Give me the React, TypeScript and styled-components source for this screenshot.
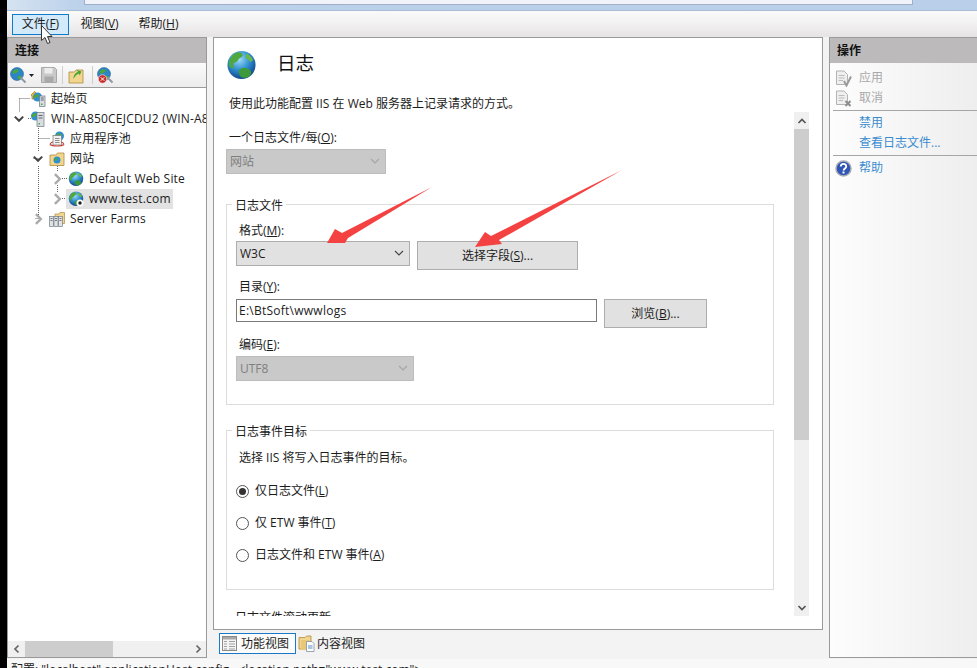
import React, { useId } from 'react';
import styled, { createGlobalStyle } from 'styled-components';

const GlobalStyle = createGlobalStyle`
  html, body {
    margin: 0;
    padding: 0;
    background: #000;
  }
  body {
    font-family: "Open Sans", "Noto Sans CJK SC", sans-serif;
    font-size: 12px;
    line-height: 16px;
    color: #1c1c1c;
  }
  * {
    box-sizing: border-box;
  }
`;

const Shell = styled.div`
  position: relative;
  width: 977px;
  height: 668px;
  overflow: hidden;
  display: flex;
  flex-direction: column;
  border-left: 7px solid #000;
  background: #f3f3f3;
`;

const TitleBand = styled.div`
  height: 11px;
  flex: none;
  padding-left: 77px;
  background: linear-gradient(90deg, #d5e2f1 0, #bcd2eb 70px, #b9cfea 100%);
  border-bottom: 1px solid #a9bcd6;
`;

const AddressBox = styled.div`
  width: 829px;
  height: 5px;
  background: #f0f4fa;
  border: 1px solid #9fb0c6;
  border-top: none;
`;

const MenuBar = styled.div`
  height: 26px;
  flex: none;
  display: flex;
  align-items: center;
  gap: 2px;
  padding-left: 5px;
  background: linear-gradient(180deg, #fafafa 0%, #f4f3f3 40%, #e5e3e3 100%);
`;

const MenuItem = styled.div<{ $active?: boolean }>`
  width: 57px;
  height: 21px;
  display: flex;
  align-items: center;
  justify-content: center;
  border: 1px solid ${(p) => (p.$active ? '#0f7ccb' : 'transparent')};
  background: ${(p) => (p.$active ? '#d3eafb' : 'transparent')};
`;

const Main = styled.div`
  height: 621px;
  flex: none;
  display: flex;
  gap: 6px;
`;

const Panel = styled.section`
  display: flex;
  flex-direction: column;
  border: 1px solid #9a9a9a;
  background: #fff;
  overflow: hidden;
`;

const LeftPanel = styled(Panel)`
  width: 200px;
`;

const PanelHeader = styled.header`
  height: 25px;
  flex: none;
  display: flex;
  align-items: center;
  padding-left: 7px;
  background: #bcbabb;
  font-weight: 700;
  color: #111;
`;

const Toolbar = styled.div`
  height: 25px;
  flex: none;
  display: flex;
  align-items: center;
  padding-left: 2px;
  background: linear-gradient(180deg, #fbfbfb, #ececec);
  border-bottom: 1px solid #9a9a9a;
`;

const ToolGap = styled.span`
  width: 7px;
`;

const ToolCaret = styled.svg`
  margin-left: 2px;
`;

const ToolSep = styled.span<{ $left: number; $right: number }>`
  width: 1px;
  height: 18px;
  background: #cfcfcf;
  margin: 0 ${(p) => p.$right}px 0 ${(p) => p.$left}px;
`;

const Tree = styled.div`
  position: relative;
  flex: 1;
  padding-top: 1px;
  overflow: hidden;
  letter-spacing: 0.2px;
`;

const TreeLines = styled.svg`
  position: absolute;
  left: 0;
  top: 0;
`;

const TreeRow = styled.div<{ $depth: number }>`
  position: relative;
  height: 20px;
  display: flex;
  align-items: center;
  white-space: nowrap;
  padding-left: ${(p) => 3 + p.$depth * 19}px;
`;

const Expander = styled.span`
  width: 19px;
  height: 20px;
  flex: none;
  display: flex;
  align-items: center;
  justify-content: center;
  padding-right: 3px;
`;

const NodeBody = styled.span<{ $selected?: boolean }>`
  height: 20px;
  display: flex;
  align-items: center;
  gap: 5px;
  margin-left: -2px;
  padding: 0 2px 0 2px;
  background: ${(p) => (p.$selected ? '#e2e2e2' : 'transparent')};
`;

const HScroll = styled.div`
  height: 16px;
  flex: none;
  display: flex;
  align-items: center;
  background: #f0f0f0;
`;

const HArrow = styled.span`
  width: 17px;
  height: 16px;
  flex: none;
  display: flex;
  align-items: center;
  justify-content: center;
`;

const HThumb = styled.span`
  width: 88px;
  height: 16px;
  background: #cdcdcd;
  margin-right: auto;
`;

const CenterColumn = styled.div`
  width: 610px;
  display: flex;
  flex-direction: column;
`;

const CenterPanel = styled(Panel)`
  height: 593px;
  flex: none;
  padding-bottom: 13px;
`;

const Head = styled.div`
  height: 74px;
  flex: none;
  padding: 12px 0 0 12px;
`;

const TitleRow = styled.div`
  display: flex;
  align-items: flex-start;
  gap: 20px;
  height: 31px;
`;

const Title = styled.h1`
  margin: 0;
  font-size: 18.5px;
  line-height: 26px;
  font-weight: 400;
  color: #111;
`;

const Description = styled.p`
  margin: 15px 0 0 3px;
`;

const BodyRow = styled.div`
  flex: 1;
  min-height: 0;
  display: flex;
`;

const Body = styled.div`
  flex: 1;
  min-width: 0;
  overflow: hidden;
  padding: 18px 20px 0 12px;
`;

const FieldLabel = styled.div<{ $top?: number; $inset?: number }>`
  margin-top: ${(p) => p.$top ?? 0}px;
  margin-left: ${(p) => p.$inset ?? 3}px;
`;

const Group = styled.fieldset<{ $top: number; $bottom?: number }>`
  margin: ${(p) => p.$top}px 0 0;
  padding: 11px 9px ${(p) => p.$bottom ?? 0}px;
  border: 1px solid #dcdcdc;
  min-width: 0;
`;

const Legend = styled.legend`
  position: relative;
  top: 2px;
  margin-left: -4px;
  padding: 0 3px;
`;

const Select = styled.div<{ $width: number; $disabled?: boolean; $top: number }>`
  width: ${(p) => p.$width}px;
  height: 25px;
  flex: none;
  margin-top: ${(p) => p.$top}px;
  display: flex;
  align-items: center;
  justify-content: space-between;
  padding: 0 5px 0 3px;
  border: 1px solid ${(p) => (p.$disabled ? '#bdbdbd' : '#adadad')};
  background: ${(p) => (p.$disabled ? '#c9c9c9' : '#e1e1e1')};
  color: ${(p) => (p.$disabled ? '#7f7f7f' : '#1c1c1c')};
`;

const ControlRow = styled.div<{ $top: number }>`
  display: flex;
  align-items: flex-start;
  gap: 7px;
  margin-top: ${(p) => p.$top}px;
`;

const Button = styled.div<{ $width: number }>`
  width: ${(p) => p.$width}px;
  height: 29px;
  flex: none;
  display: flex;
  align-items: center;
  justify-content: center;
  border: 1px solid #adadad;
  background: #e1e1e1;
`;

const TextBox = styled.div`
  width: 361px;
  height: 23px;
  flex: none;
  display: flex;
  align-items: center;
  padding-left: 2px;
  letter-spacing: 0.25px;
  border: 1px solid #7a7a7a;
  background: #fff;
`;

const RadioRow = styled.label<{ $top: number }>`
  display: flex;
  align-items: center;
  gap: 6px;
  height: 16px;
  margin-top: ${(p) => p.$top}px;
`;

const RadioMark = styled.span<{ $checked?: boolean }>`
  width: 13px;
  height: 13px;
  flex: none;
  display: flex;
  align-items: center;
  justify-content: center;
  border: 1px solid #555;
  border-radius: 50%;
  background: #fff;

  &::after {
    content: '';
    width: 7px;
    height: 7px;
    border-radius: 50%;
    background: ${(p) => (p.$checked ? '#333' : 'transparent')};
  }
`;

const VScroll = styled.div`
  width: 15px;
  flex: none;
  margin-right: 13px;
  display: flex;
  flex-direction: column;
  background: #f0f0f0;
`;

const VArrow = styled.span`
  height: 17px;
  flex: none;
  display: flex;
  align-items: center;
  justify-content: center;
`;

const VThumb = styled.span`
  height: 311px;
  flex: none;
  background: #cdcdcd;
  margin-bottom: auto;
`;

const TabBar = styled.div`
  display: flex;
  align-items: center;
  gap: 1px;
  margin: 3px 0 0 6px;
`;

const Tab = styled.div<{ $active?: boolean }>`
  height: 21px;
  display: flex;
  align-items: center;
  gap: ${(p) => (p.$active ? 4 : 2)}px;
  padding: 0 6px 0 ${(p) => (p.$active ? 2 : 0)}px;
  border: 1px solid ${(p) => (p.$active ? '#1a78c8' : 'transparent')};
  background: ${(p) => (p.$active ? '#fcfcfc' : 'transparent')};
`;

const RightPanel = styled(Panel)`
  flex: 1;
  border-right: none;
  background: linear-gradient(90deg, #fdfdfd, #eeeeee);
`;

const ActionList = styled.div`
  padding-top: 5px;
`;

const ActionRow = styled.div<{ $tone: 'muted' | 'link' }>`
  height: 20px;
  display: flex;
  align-items: center;
  padding-left: 29px;
  position: relative;
  color: ${(p) => (p.$tone === 'muted' ? '#a9a9a9' : '#3a8ccf')};
`;

const ActionIcon = styled.span`
  position: absolute;
  left: 5px;
  top: 2px;
  display: flex;
`;

const ActionSep = styled.div`
  height: 1px;
  margin: 2px 0 2px 3px;
  background: #a6a6a6;
`;

const StatusBar = styled.div`
  flex: 1;
  min-height: 0;
  overflow: hidden;
  margin-top: 1px;
  padding: 3px 0 0 4px;
  white-space: nowrap;
  background: #f8f8f8;
`;

const Overlay = styled.svg`
  position: absolute;
  left: -7px;
  top: 0;
  pointer-events: none;
`;

const Glyph = styled.svg`
  flex: none;
`;

const Globe = ({ size = 16, mark }: { size?: number; mark?: React.ReactNode }) => {
  const id = useId();
  return (
    <Glyph width={size} height={size} viewBox="0 0 32 32">
      <defs>
        <radialGradient id={id} cx="42%" cy="30%" r="75%">
          <stop offset="0" stopColor="#9fdcf7" />
          <stop offset="0.5" stopColor="#2f8fd0" />
          <stop offset="1" stopColor="#0c3b86" />
        </radialGradient>
      </defs>
      <circle cx="16" cy="15.5" r="14.5" fill={`url(#${id})`} />
      <path d="M9 3.5c4-2 7-1 8 1s-1 3-3 4-1 3-4 4-3 3-2 5-2 2-4 0-1-10 5-14z" fill="#4fa83d" />
      <path d="M21 3.5c3 1 6 4 7 7l-3 2-2-3-3-1 1-5z" fill="#68b84a" />
      <path d="M14 20c3-2 7-2 10 0s2 5 0 7-6 2-8 1-4-6-2-8z" fill="#3d9a3a" />
      {mark}
    </Glyph>
  );
};

const StartIcon = () => (
  <Glyph width="16" height="16" viewBox="0 0 32 32">
    <path d="M2 8l7-7 7 7-2 2v6H4v-6z" fill="#f0b93a" stroke="#b77c12" strokeWidth="1.5" />
    <circle cx="15" cy="12" r="9" fill="#2f8fd0" />
    <path d="M9 9c3-3 6-3 8-1s-2 4-4 5-3 2-5 0 0-3 1-4z" fill="#4fa83d" />
    <rect x="19" y="10" width="11" height="21" fill="#d9dde2" stroke="#6f7780" strokeWidth="1.4" />
    <path d="M21.500 14h6M21.500 18h6" stroke="#59616b" strokeWidth="2" />
    <rect x="22" y="25" width="3" height="3" fill="#46b04a" />
  </Glyph>
);

const ServerIcon = () => (
  <Glyph width="16" height="16" viewBox="0 0 32 32">
    <circle cx="11" cy="10" r="9" fill="#2f8fd0" />
    <path d="M5 7c3-3 6-3 8-1s-2 4-4 5-3 2-5 0 0-3 1-4z" fill="#4fa83d" />
    <rect x="14" y="3" width="14" height="28" fill="#d9dde2" stroke="#6f7780" strokeWidth="1.4" />
    <path d="M17 9h8M17 14h8" stroke="#59616b" strokeWidth="2" />
    <rect x="17" y="24" width="3" height="3" fill="#46b04a" />
  </Glyph>
);

const PoolIcon = () => (
  <Glyph width="16" height="16" viewBox="0 0 32 32">
    <circle cx="21" cy="10" r="9" fill="#2f8fd0" />
    <path d="M16 7c3-3 6-3 8-1s-2 4-4 5-3 2-5 0 0-3 1-4z" fill="#4fa83d" />
    <rect x="8" y="9" width="17" height="19" fill="#f1f1f1" stroke="#777" strokeWidth="1.4" />
    <path d="M12 15h9M12 19h9M12 23h9" stroke="#777" strokeWidth="1.6" />
    <path d="M2 27c1-3 3-5 6-5M30 27c-1-3-3-5-6-5M2 27c5 4 23 4 28 0" fill="none" stroke="#c9453a" strokeWidth="2.4" />
  </Glyph>
);

const SitesIcon = () => (
  <Glyph width="16" height="16" viewBox="0 0 32 32">
    <path d="M2 8h12l3-4h13v25H2z" fill="#f2d68f" stroke="#b08a3c" strokeWidth="1.6" />
    <circle cx="16" cy="18" r="7" fill="#2f8fd0" />
    <path d="M11 16c2-2 5-2 6-1s-1 3-3 4-3 1-4 0 0-2 1-3z" fill="#4fa83d" />
  </Glyph>
);

const FarmIcon = () => (
  <Glyph width="16" height="16" viewBox="0 0 32 32">
    <path d="M12 6h8l2-3h9v22H12z" fill="#f2d68f" stroke="#b08a3c" strokeWidth="1.4" />
    <g fill="#dfe3e6" stroke="#6f7780" strokeWidth="1.3">
      <rect x="1" y="11" width="8" height="20" />
      <rect x="10" y="11" width="8" height="20" />
      <rect x="19" y="11" width="8" height="20" />
    </g>
    <path d="M3 15h4M3 19h4M12 15h4M12 19h4M21 15h4M21 19h4" stroke="#59616b" strokeWidth="1.6" />
  </Glyph>
);

const Chevron = ({ dir, color = '#aaaaaa', size = 10 }: { dir: 'up' | 'down' | 'left' | 'right'; color?: string; size?: number }) => {
  const points = {
    up: '1.5,7 5,3.5 8.5,7',
    down: '1.5,3 5,6.5 8.5,3',
    left: '6.5,1.5 3,5 6.5,8.5',
    right: '3.5,1.5 7,5 3.5,8.5',
  }[dir];
  return (
    <svg width={size} height={size} viewBox="0 0 10 10">
      <polyline points={points} fill="none" stroke={color} strokeWidth="1.7" />
    </svg>
  );
};

const SelectCaret = ({ color }: { color: string }) => (
  <svg width="10" height="7" viewBox="0 0 10 7">
    <polyline points="1,1 5,5 9,1" fill="none" stroke={color} strokeWidth="1.1" />
  </svg>
);

const GlobeTool = ({ badge }: { badge?: boolean }) => (
  <Glyph width="17" height="17" viewBox="0 0 34 34">
    <circle cx="14" cy="14" r="13" fill="#2c86c6" stroke="#1b4f91" strokeWidth="1" />
    <path d="M6 8c4-4 9-4 11-2s-2 5-5 6-4 3-6 1-1-4 0-5zM15 19c3-2 6-2 8 0s0 5-3 6-6-4-5-6z" fill="#4aa63f" />
    <path d="M21 21l10 10" stroke="#8f98a3" strokeWidth="4" />
    {badge && <circle cx="11" cy="24" r="8.500" fill="#c92e2e" stroke="#fff" strokeWidth="1.2" />}
    {badge && <path d="M7.500 20.500l7 7M14.500 20.500l-7 7" stroke="#fff" strokeWidth="2" />}
  </Glyph>
);

const DiskTool = () => (
  <svg width="16" height="16" viewBox="0 0 32 32">
    <path d="M1 1h26l4 4v26H1z" fill="#c9c9c9" stroke="#9b9b9b" strokeWidth="1.6" />
    <rect x="7" y="2" width="16" height="11" fill="#ececec" />
    <rect x="7" y="19" width="18" height="12" fill="#a9a9a9" />
  </svg>
);

const FolderUpTool = () => (
  <svg width="16" height="17" viewBox="0 0 32 34">
    <path d="M2 10h11l3-4h14v26H2z" fill="#f2d68f" stroke="#b08a3c" strokeWidth="1.6" />
    <path d="M11 24c0-8 4-13 9-14l-2-4 9 3-4 8-1-4c-4 1-8 5-11 11z" fill="#41a63a" />
  </svg>
);

const DocAction = ({ kind }: { kind: 'check' | 'cross' }) => (
  <svg width="17" height="17" viewBox="0 0 34 34">
    <path d="M3 2h15l7 7v20H3z" fill="#efefef" stroke="#b3b3b3" strokeWidth="2" />
    <path d="M7 11h12M7 16h12M7 21h9" stroke="#bcbcbc" strokeWidth="2" />
    {kind === 'check' ? (
      <path d="M18 22l5 9 9-18" fill="none" stroke="#9a9a9a" strokeWidth="4" />
    ) : (
      <path d="M21 22l10 10M31 22L21 32" stroke="#8d8d8d" strokeWidth="4" />
    )}
  </svg>
);

const HelpIcon = () => (
  <svg width="17" height="17" viewBox="0 0 34 34">
    <circle cx="17" cy="17" r="15" fill="#2f55b5" stroke="#a9adb5" strokeWidth="3" />
    <path d="M11.500 13c0-7 11-7 11 0 0 4-5 4-5.500 8" fill="none" stroke="#fff" strokeWidth="3.6" />
    <rect x="15" y="23" width="4" height="4" fill="#fff" />
  </svg>
);

const GridTabIcon = () => (
  <svg width="15" height="15" viewBox="0 0 15 15">
    <rect x="0.5" y="0.5" width="14" height="14" fill="#f5f5f5" stroke="#8a8a8a" />
    <rect x="1" y="1" width="13" height="2.500" fill="#a9a9a9" />
    <path d="M2 5.500h3M2 8h3M2 10.500h3M2 13h3M7 5.500h6M7 8h6M7 10.500h6M7 13h6" stroke="#a0a0a0" />
  </svg>
);

const ContentTabIcon = () => (
  <svg width="17" height="17" viewBox="0 0 34 34">
    <path d="M2 5h12l3-3h9v26H2z" fill="#f2d68f" stroke="#b08a3c" strokeWidth="1.6" />
    <path d="M6 10h18v20H6z" fill="#e8c877" />
    <path d="M17 13h11l4 4v16H17z" fill="#fff" stroke="#7f8fa5" strokeWidth="1.6" />
    <path d="M20 22h9M20 26h9" stroke="#3f7fc1" strokeWidth="1.8" />
  </svg>
);

const App = () => (
  <>
    <GlobalStyle />
    <Shell>
      <TitleBand>
        <AddressBox />
      </TitleBand>
      <MenuBar>
        <MenuItem $active>文件(<u>F</u>)</MenuItem>
        <MenuItem>视图(<u>V</u>)</MenuItem>
        <MenuItem>帮助(<u>H</u>)</MenuItem>
      </MenuBar>
      <Main>
        <LeftPanel>
          <PanelHeader>连接</PanelHeader>
          <Toolbar>
            <GlobeTool />
            <ToolCaret width="5" height="3" viewBox="0 0 5 3">
              <polygon points="0,0 5,0 2.500,3" fill="#222" />
            </ToolCaret>
            <ToolGap />
            <DiskTool />
            <ToolSep $left={5} $right={5} />
            <FolderUpTool />
            <ToolSep $left={8} $right={4} />
            <GlobeTool badge />
          </Toolbar>
          <Tree>
            <TreeLines width="100" height="140" viewBox="0 0 100 140">
              <path
                d="M11.500 10.500H22M11.500 10.500V24M20 30.500h3M30.500 38V63M30.500 78V127M30.500 50.500H42M30.500 70.500H25M49.500 78V84M49.500 97V104M54 90.500h6M54 110.500h6M30.500 130.500H27"
                fill="none"
                stroke="#666"
                strokeDasharray="1 1"
              />
            </TreeLines>
            <TreeRow $depth={0}>
              <Expander />
              <NodeBody><StartIcon />起始页</NodeBody>
            </TreeRow>
            <TreeRow $depth={0}>
              <Expander><Chevron dir="down" color="#444" size={12} /></Expander>
              <NodeBody><ServerIcon />WIN-A850CEJCDU2 (WIN-A850CEJCDU2\Administrator)</NodeBody>
            </TreeRow>
            <TreeRow $depth={1}>
              <Expander />
              <NodeBody><PoolIcon />应用程序池</NodeBody>
            </TreeRow>
            <TreeRow $depth={1}>
              <Expander><Chevron dir="down" color="#444" size={12} /></Expander>
              <NodeBody><SitesIcon />网站</NodeBody>
            </TreeRow>
            <TreeRow $depth={2}>
              <Expander><Chevron dir="right" size={14} /></Expander>
              <NodeBody><Globe />Default Web Site</NodeBody>
            </TreeRow>
            <TreeRow $depth={2}>
              <Expander><Chevron dir="right" size={14} /></Expander>
              <NodeBody $selected>
                <Globe
                  mark={
                    <>
                      <circle cx="24" cy="24" r="7" fill="#fff" />
                      <circle cx="24" cy="24" r="3.500" fill="#222" />
                    </>
                  }
                />
                www.test.com
              </NodeBody>
            </TreeRow>
            <TreeRow $depth={1}>
              <Expander><Chevron dir="right" size={14} /></Expander>
              <NodeBody><FarmIcon />Server Farms</NodeBody>
            </TreeRow>
          </Tree>
          <HScroll>
            <HArrow><Chevron dir="left" color="#666" /></HArrow>
            <HThumb />
            <HArrow><Chevron dir="right" color="#666" /></HArrow>
          </HScroll>
        </LeftPanel>

        <CenterColumn>
          <CenterPanel>
            <Head>
              <TitleRow>
                <Globe size={31} />
                <Title>日志</Title>
              </TitleRow>
              <Description>使用此功能配置 IIS 在 Web 服务器上记录请求的方式。</Description>
            </Head>
            <BodyRow>
              <Body>
                <FieldLabel>一个日志文件/每(<u>O</u>):</FieldLabel>
                <Select $width={160} $top={3} $disabled>
                  网站
                  <SelectCaret color="#a5a5a5" />
                </Select>

                <Group $top={22} $bottom={23}>
                  <Legend>日志文件</Legend>
                  <FieldLabel>格式(<u>M</u>):</FieldLabel>
                  <ControlRow $top={2}>
                    <Select $width={174} $top={0}>
                      W3C
                      <SelectCaret color="#444" />
                    </Select>
                    <Button $width={161}>选择字段(<u>S</u>)...</Button>
                  </ControlRow>
                  <FieldLabel $top={9}>目录(<u>Y</u>):</FieldLabel>
                  <ControlRow $top={4}>
                    <TextBox>E:\BtSoft\wwwlogs</TextBox>
                    <Button $width={103}>浏览(<u>B</u>)...</Button>
                  </ControlRow>
                  <FieldLabel $top={9}>编码(<u>E</u>):</FieldLabel>
                  <Select $width={178} $top={3} $disabled>
                    UTF8
                    <SelectCaret color="#a5a5a5" />
                  </Select>
                </Group>

                <Group $top={17} $bottom={26}>
                  <Legend>日志事件目标</Legend>
                  <FieldLabel $top={1}>选择 IIS 将写入日志事件的目标。</FieldLabel>
                  <RadioRow $top={17}>
                    <RadioMark $checked />
                    <span>仅日志文件(<u>L</u>)</span>
                  </RadioRow>
                  <RadioRow $top={16}>
                    <RadioMark />
                    <span>仅 ETW 事件(<u>T</u>)</span>
                  </RadioRow>
                  <RadioRow $top={16}>
                    <RadioMark />
                    <span>日志文件和 ETW 事件(<u>A</u>)</span>
                  </RadioRow>
                </Group>

                <Group $top={18} $bottom={40}>
                  <Legend>日志文件滚动更新</Legend>
                </Group>
              </Body>
              <VScroll>
                <VArrow><Chevron dir="up" color="#555" /></VArrow>
                <VThumb />
                <VArrow><Chevron dir="down" color="#555" /></VArrow>
              </VScroll>
            </BodyRow>
          </CenterPanel>
          <TabBar>
            <Tab $active><GridTabIcon />功能视图</Tab>
            <Tab><ContentTabIcon />内容视图</Tab>
          </TabBar>
        </CenterColumn>

        <RightPanel>
          <PanelHeader>操作</PanelHeader>
          <ActionList>
            <ActionRow $tone="muted"><ActionIcon><DocAction kind="check" /></ActionIcon>应用</ActionRow>
            <ActionRow $tone="muted"><ActionIcon><DocAction kind="cross" /></ActionIcon>取消</ActionRow>
            <ActionSep />
            <ActionRow $tone="link">禁用</ActionRow>
            <ActionRow $tone="link">查看日志文件...</ActionRow>
            <ActionSep />
            <ActionRow $tone="link"><ActionIcon><HelpIcon /></ActionIcon>帮助</ActionRow>
          </ActionList>
        </RightPanel>
      </Main>
      <StatusBar>配置: "localhost" applicationHost.config , &lt;location path="www.test.com"&gt;</StatusBar>

      <Overlay width="977" height="668" viewBox="0 0 977 668">
        <polygon points="327,243 335,229 342,233 432,187 348,238 345,243" fill="#f44242" />
        <polygon points="475,247 485,232 491,236 622,170 499,240 502,244" fill="#f44242" />
        <path
          d="M41.500 25.500v15l3.500-3 2.500 6 2.500-1-2.500-6H52z"
          fill="#fff"
          stroke="#333"
          strokeWidth="1"
        />
      </Overlay>
    </Shell>
  </>
);

export default App;
